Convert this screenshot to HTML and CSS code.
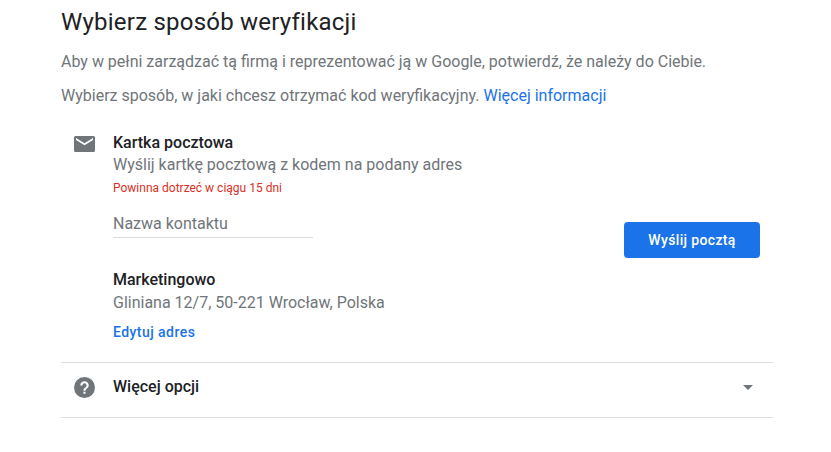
FILE: index.html
```html
<!DOCTYPE html>
<html lang="pl">
<head>
<meta charset="utf-8">
<title>Wybierz sposób weryfikacji</title>
<link rel="stylesheet" href="styles.css">
</head>
<body>
<main class="page">
  <h1 class="title">Wybierz sposób weryfikacji</h1>
  <p class="intro">Aby w pełni zarządzać tą firmą i reprezentować ją w Google, potwierdź, że należy do Ciebie.</p>
  <p class="intro second">Wybierz sposób, w jaki chcesz otrzymać kod weryfikacyjny. <a class="link" href="#">Więcej informacji</a></p>
  <section class="option">
    <svg class="icon mail" viewBox="0 0 21 16" aria-hidden="true"><path fill="#70757a" fill-rule="evenodd" d="M1.500 0h18a1.500 1.500 0 0 1 1.500 1.500v13a1.500 1.500 0 0 1-1.500 1.500h-18a1.500 1.500 0 0 1-1.500-1.500v-13a1.500 1.500 0 0 1 1.500-1.500zm17.500 4v-2l-8.500 5.300l-8.500-5.300v2l8.500 5.300z"/></svg>
    <div class="details">
      <h2 class="name">Kartka pocztowa</h2>
      <p class="desc">Wyślij kartkę pocztową z kodem na podany adres</p>
      <p class="warn">Powinna dotrzeć w ciągu 15 dni</p>
      <div class="field">Nazwa kontaktu</div>
      <h2 class="name business">Marketingowo</h2>
      <p class="desc">Gliniana 12/7, 50-221 Wrocław, Polska</p>
      <a class="edit" href="#">Edytuj adres</a>
    </div>
    <button class="send" type="button">Wyślij pocztą</button>
  </section>
  <section class="more">
    <svg class="icon help" viewBox="0 0 22 22" aria-hidden="true"><path fill="#70757a" fill-rule="evenodd" d="M11 0a11 11 0 1 1 0 22a11 11 0 0 1 0-22zm-1.100 17.600h2.200v-2.200h-2.200zm1.100-13.200a4.400 4.400 0 0 0-4.400 4.400h2.200a2.200 2.200 0 0 1 4.400 0c0 2.200-3.300 1.950-3.300 5.500h2.200c0-2.500 3.300-2.750 3.300-5.500a4.400 4.400 0 0 0-4.400-4.400z"/></svg>
    <span class="name">Więcej opcji</span>
    <span class="arrow"></span>
  </section>
</main>
</body>
</html>
```
FILE: styles.css
```css
html, body { margin: 0; padding: 0; background: #fff; }
body { font-family: Roboto, "Liberation Sans", sans-serif; color: #70757a; overflow: hidden; }
.page { width: 712px; margin-left: 61px; }
.title { margin: 0; padding-top: 7px; font-size: 24px; line-height: 30px; font-weight: 400; color: #202124; font-family: Roboto, sans-serif; letter-spacing: 0.22px; }
.intro { margin: 0; padding-top: 14px; font-size: 16px; line-height: 22px; }
.second { padding-top: 12px; }
.link { color: #1a73e8; text-decoration: none; }
.option { display: flex; align-items: flex-start; padding-top: 25px; padding-bottom: 20px; border-bottom: 1px solid #dadce0; }
.icon { flex: none; }
.mail { width: 21px; height: 16px; margin: 4px 18px 0 13px; }
.details { flex: 1; }
.name { margin: 0; font-size: 16px; line-height: 22px; font-weight: 500; color: #202124; }
.desc { margin: 0; font-size: 16px; line-height: 22px; }
.warn { margin: 0; padding-top: 3px; font-size: 12px; line-height: 18px; color: #d93025; }
.field { width: 200px; margin-top: 16px; padding-bottom: 3px; box-sizing: border-box; height: 25px; font-size: 16px; line-height: 22px; border-bottom: 1px solid #dadce0; }
.business { margin-top: 31px; margin-bottom: 1px; }
.edit { display: block; margin-top: 8px; font-size: 14px; line-height: 20px; font-weight: 500; color: #1a73e8; text-decoration: none; letter-spacing: 0.45px; }
.send { flex: none; width: 136px; height: 36px; margin: 90px 13px 0 0; border: 0; border-radius: 4px; background: #1a73e8; color: #fff; font: 500 14px Roboto, sans-serif; letter-spacing: 0.35px; }
.more { display: flex; align-items: center; box-sizing: border-box; height: 55px; padding-bottom: 6px; border-bottom: 1px solid #dadce0; }
.help { width: 21px; height: 21px; margin: 0 18px 0 13px; }
.more .name { flex: 1; }
.arrow { width: 0; height: 0; margin-right: 20px; border-left: 5px solid transparent; border-right: 5px solid transparent; border-top: 5px solid #70757a; }
```
